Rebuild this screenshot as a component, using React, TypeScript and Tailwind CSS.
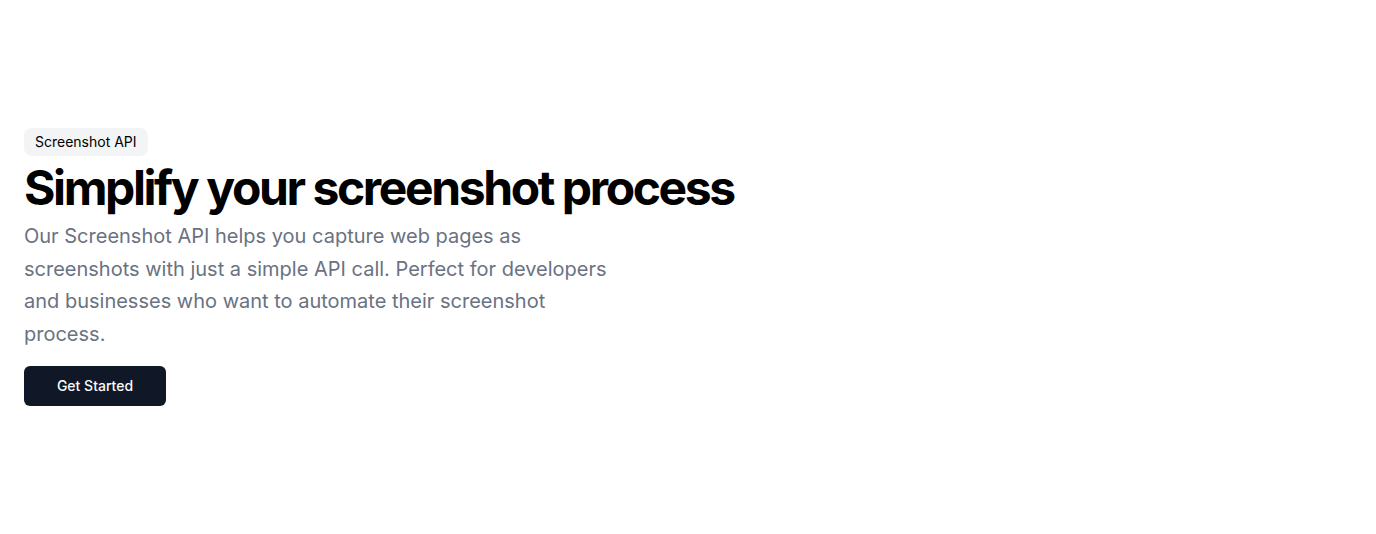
export default function App() {
  return (
    <section className="w-full bg-white py-32 font-['Inter',sans-serif]">
      <div className="px-6">
        <div className="flex flex-col items-start space-y-2">
          <div className="inline-block rounded-lg bg-gray-100 px-[11px] py-1 text-sm text-black">Screenshot API</div>
          <h1 className="text-5xl font-bold tracking-tighter text-black">Simplify your screenshot process</h1>
          <p className="max-w-[600px] text-xl/relaxed text-gray-500">
            Our Screenshot API helps you capture web pages as screenshots with just a simple API call. Perfect for
            developers and businesses who want to automate their screenshot process.
          </p>
          <div className="pt-2">
            <button className="inline-flex h-10 w-[142px] items-center justify-center rounded-md bg-gray-900 text-sm font-medium text-gray-50">
              Get Started
            </button>
          </div>
        </div>
      </div>
    </section>
  );
}
